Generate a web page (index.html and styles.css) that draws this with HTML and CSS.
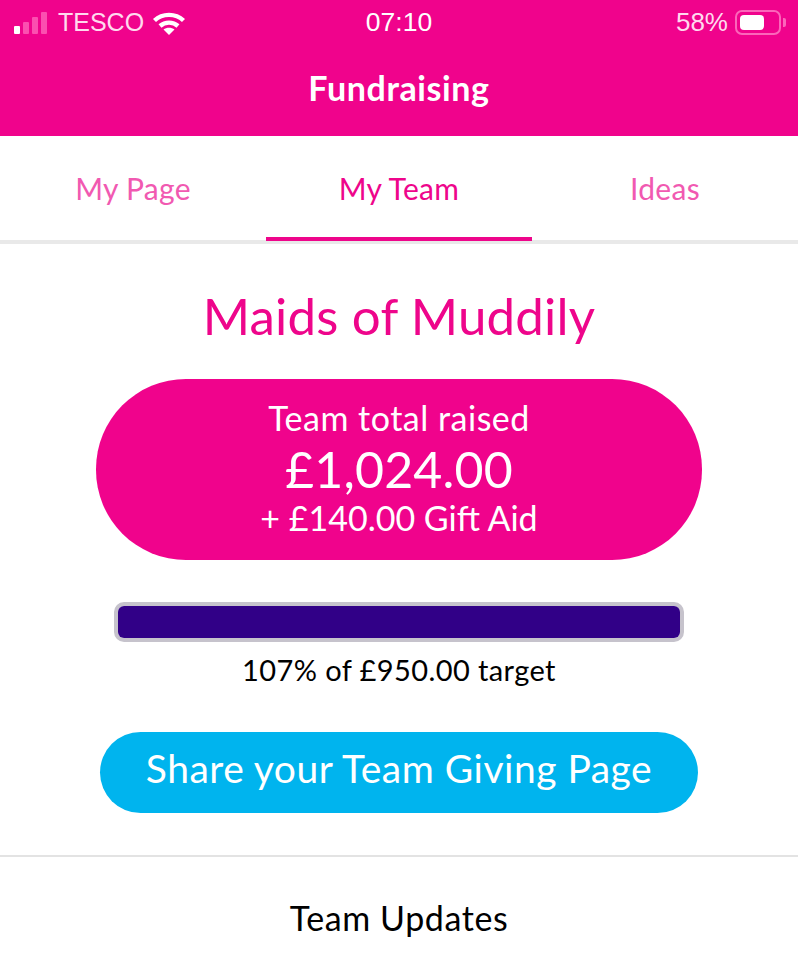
FILE: index.html
```html
<!DOCTYPE html>
<html lang="en">
<head>
  <meta charset="UTF-8">
  <meta name="viewport" content="width=device-width, initial-scale=1">
  <title>Fundraising</title>
  <link rel="stylesheet" href="styles.css">
</head>
<body>
  <header class="top">
    <div class="status">
      <div class="status-left">
        <span class="signal"><i class="on"></i><i></i><i></i><i></i></span>
        <span class="carrier">TESCO</span>
        <svg class="wifi" width="34" height="24" viewBox="0 0 34 24" fill="none" stroke="#fff" stroke-width="4.4">
          <path d="M2.500 9.500C10.500 2 23.500 2 31.500 9.500"/>
          <path d="M8 15c5-4.500 13-4.500 18 0"/>
          <path d="M17 24l-5.500-5.500c3-2.500 8-2.500 11 0z" fill="#fff" stroke="none"/>
        </svg>
      </div>
      <div class="status-time">07:10</div>
      <div class="status-right">
        <span>58%</span>
        <span class="battery"><span class="battery-fill"></span></span>
        <span class="battery-cap"></span>
      </div>
    </div>
    <h1 class="top-title">Fundraising</h1>
  </header>

  <nav class="tabs">
    <a class="tab">My Page</a>
    <a class="tab active">My Team</a>
    <a class="tab">Ideas</a>
  </nav>

  <main class="content">
    <h2 class="team-name">Maids of Muddily</h2>
    <div class="total">
      <div class="total-label">Team total raised</div>
      <div class="total-amount">£1,024.00</div>
      <div class="total-aid">+ £140.00 Gift Aid</div>
    </div>
    <div class="progress"><div class="progress-bar"></div></div>
    <p class="target">107% of £950.00 target</p>
    <a class="share">Share your Team Giving Page</a>
  </main>

  <section class="updates">Team Updates</section>
</body>
</html>
```

FILE: styles.css
```css
* {
  box-sizing: border-box;
}
html, body {
  height: 960px;
  overflow: hidden;
}
body {
  margin: 0;
  background: #fff;
  color: #000;
  font-family: Lato, "Open Sans", sans-serif;
}
.top {
  height: 136px;
  background: #f0038c;
  color: #fff;
}
.status {
  display: grid;
  grid-template-columns: 1fr auto 1fr;
  align-items: center;
  height: 45px;
  padding: 0 12px 0 14px;
  font-family: "Liberation Sans", Arial, sans-serif;
  font-size: 26px;
  color: #ffd9ee;
}
.status-left {
  display: flex;
  align-items: center;
  gap: 10px;
}
.signal {
  display: flex;
  align-items: flex-end;
  gap: 3px;
  height: 22px;
}
.signal i {
  width: 6px;
  background: #fb4fb0;
  border-radius: 1px;
}
.signal i:nth-child(1) { height: 8px; }
.signal i:nth-child(2) { height: 12px; }
.signal i:nth-child(3) { height: 17px; }
.signal i:nth-child(4) { height: 22px; }
.signal i.on {
  background: #fff;
}
.carrier {
  margin-left: 1px;
  font-size: 25px;
}
.wifi {
  margin-left: -2px;
}
.status-time {
  margin-right: 2px;
  color: #fff;
  font-size: 26.500px;
}
.status-right {
  display: flex;
  align-items: center;
  justify-content: flex-end;
}
.battery {
  display: block;
  width: 46px;
  height: 25px;
  margin-left: 7px;
  padding: 3px;
  border: 2px solid #fb66ba;
  border-radius: 7px;
}
.battery-fill {
  display: block;
  width: 24px;
  height: 100%;
  background: #fff;
  border-radius: 4px;
}
.battery-cap {
  width: 3px;
  height: 9px;
  margin-left: 2px;
  background: #fb66ba;
  border-radius: 0 2px 2px 0;
}
.top-title {
  margin: 0;
  font-size: 34px;
  font-weight: 700;
  letter-spacing: 0.6px;
  line-height: 86px;
  text-align: center;
}
.tabs {
  display: grid;
  grid-template-columns: 266px 266px 266px;
  height: 108px;
  border-bottom: 4px solid #e9e9e9;
}
.tab {
  height: 105px;
  padding-top: 30px;
  color: #f159b1;
  font-size: 30px;
  letter-spacing: 0.3px;
  line-height: 44px;
  text-align: center;
}
.tab.active {
  color: #ee058b;
  border-bottom: 4px solid #ee058b;
}
.content {
  display: flex;
  flex-direction: column;
  align-items: center;
  height: 613px;
  border-bottom: 2px solid #e3e3e3;
}
.team-name {
  margin: 40px 0 0;
  color: #ee058b;
  font-size: 51px;
  font-weight: 400;
  letter-spacing: 0.2px;
  line-height: 64px;
}
.total {
  display: flex;
  flex-direction: column;
  align-items: center;
  justify-content: center;
  width: 606px;
  height: 181px;
  margin-top: 31px;
  padding-bottom: 4px;
  background: #f0038c;
  border-radius: 90px;
  color: #fff;
}
.total-label {
  font-size: 34px;
  letter-spacing: 0.5px;
  line-height: 42px;
}
.total-amount {
  font-size: 50px;
  letter-spacing: 0.2px;
  line-height: 60px;
}
.total-aid {
  margin-top: -2px;
  font-size: 34px;
  line-height: 42px;
}
.progress {
  width: 570px;
  height: 40px;
  margin-top: 42px;
  background: #fff;
  border: 4px solid #c6c3cc;
  border-radius: 10px;
}
.progress-bar {
  height: 100%;
  background: #310087;
  border-radius: 6px;
}
.target {
  margin: 8px 0 0;
  font-size: 29px;
  letter-spacing: 0.4px;
  line-height: 40px;
}
.share {
  width: 598px;
  height: 81px;
  margin-top: 42px;
  background: #00b4ee;
  border-radius: 41px;
  color: #fff;
  font-size: 39px;
  letter-spacing: 0.5px;
  line-height: 72px;
  text-align: center;
}
.updates {
  padding-top: 39px;
  font-size: 34px;
  letter-spacing: 0.6px;
  line-height: 44px;
  text-align: center;
}
```
